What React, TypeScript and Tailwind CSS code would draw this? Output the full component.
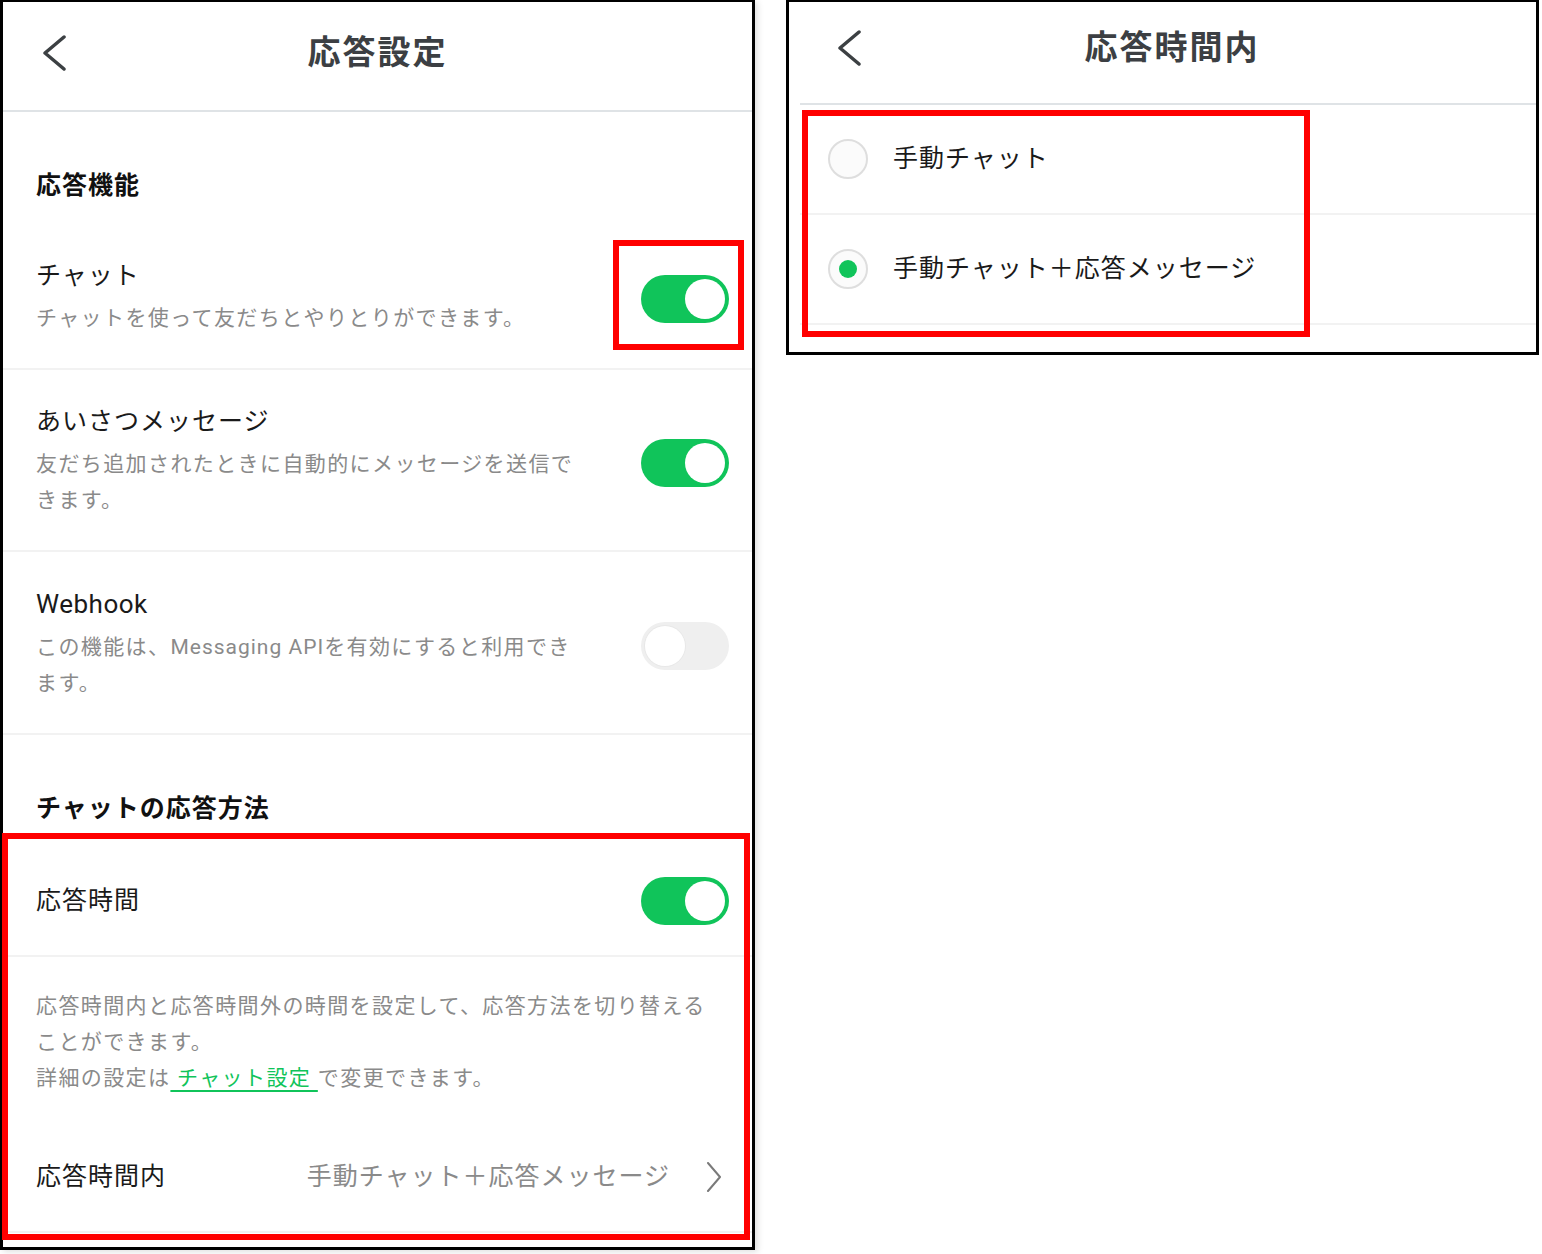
import React from "react";

const BackChevron = () => (
  <svg width="24" height="36" viewBox="0 0 24 36" fill="none">
    <path d="M22 2 L3 18 L22 34" stroke="#3c4043" strokeWidth="3.5" strokeLinecap="round" strokeLinejoin="round" />
  </svg>
);

const NextChevron = () => (
  <svg width="16" height="30" viewBox="0 0 16 30" fill="none">
    <path d="M2 1 L14 15 L2 29" stroke="#7a7a7a" strokeWidth="2" strokeLinecap="round" strokeLinejoin="round" />
  </svg>
);

const Toggle = ({ on }: { on: boolean }) =>
  on ? (
    <div className="flex h-[48px] w-[88px] shrink-0 items-center justify-end rounded-full bg-[#10c45a] p-[4px]">
      <div className="h-[40px] w-[40px] rounded-full bg-white" />
    </div>
  ) : (
    <div className="flex h-[48px] w-[88px] shrink-0 items-center justify-start rounded-full bg-[#efefef] p-[4px]">
      <div className="h-[40px] w-[40px] rounded-full bg-white shadow-[0_0_0_1px_#e8e8e8]" />
    </div>
  );

const SectionHeading = ({ children }: { children: React.ReactNode }) => (
  <div className="pb-[26px] pl-[33px] pt-[62px] text-[25px] font-bold leading-[24px] tracking-[1px] text-[#111]">
    {children}
  </div>
);

const SettingRow = ({ title, lines, on }: { title: React.ReactNode; lines: React.ReactNode[]; on: boolean }) => (
  <div className="flex items-center justify-between border-b-2 border-[#f2f2f2] pb-[32px] pl-[33px] pr-[23px] pt-[38px]">
    <div className="w-[580px]">
      <div className="text-[25px] leading-[28px] tracking-[1px] text-[#1a1a1a]">{title}</div>
      <div className="mt-[10px] text-[21px] leading-[36px] tracking-[1.4px] text-[#8a8a8a]">
        {lines.map((l, i) => (
          <div key={i} className="whitespace-nowrap">
            {l}
          </div>
        ))}
      </div>
    </div>
    <Toggle on={on} />
  </div>
);

const RadioRow = ({ label, checked }: { label: string; checked: boolean }) => (
  <div className="flex h-[110px] items-center border-b-2 border-[#f2f2f2] pl-[28px]">
    <div className="flex h-[40px] w-[40px] shrink-0 items-center justify-center rounded-full border-2 border-[#dedede] bg-[#fbfbfb]">
      {checked && <div className="h-[18px] w-[18px] rounded-full bg-[#10c45a]" />}
    </div>
    <div className="ml-[25px] text-[25px] leading-[28px] tracking-[1px] text-[#1a1a1a]">{label}</div>
  </div>
);

export default function App() {
  return (
    <div className="relative flex h-[1254px] w-[1542px] items-start gap-[31px] bg-white [font-family:Roboto,'Noto_Sans_CJK_JP',sans-serif]">
      {/* 応答設定 screen */}
      <div className="h-[1250px] w-[755px] shrink-0 overflow-hidden border-x-[3px] border-b-[3px] border-t-2 border-black bg-white shadow-[3px_2px_6px_rgba(0,0,0,0.12)]">
        <header className="grid h-[110px] grid-cols-[80px_1fr_80px] items-start border-b-2 border-[#dfe3e6] pt-[31px]">
          <div className="pl-[39px] pt-[2px]">
            <BackChevron />
          </div>
          <h1 className="text-center text-[33px] font-bold leading-[40px] tracking-[2px] text-[#3c3f43]">応答設定</h1>
          <div />
        </header>

        <SectionHeading>応答機能</SectionHeading>
        <SettingRow title="チャット" on lines={["チャットを使って友だちとやりとりができます。"]} />
        <SettingRow
          title="あいさつメッセージ"
          on
          lines={["友だち追加されたときに自動的にメッセージを送信で", "きます。"]}
        />
        <SettingRow
          title={<span className="text-[26px] tracking-[0.5px]">Webhook</span>}
          on={false}
          lines={[
            <>
              この機能は、<span className="tracking-[1px]">Messaging API</span>を有効にすると利用でき
            </>,
            "ます。",
          ]}
        />

        <SectionHeading>チャットの応答方法</SectionHeading>
        <div className="flex h-[110px] items-center justify-between border-b-2 border-[#f2f2f2] pl-[33px] pr-[23px]">
          <div className="text-[25px] leading-[28px] tracking-[1px] text-[#1a1a1a]">応答時間</div>
          <Toggle on />
        </div>
        <div className="pb-[27px] pl-[33px] pt-[31px] text-[21px] leading-[36px] tracking-[1.4px] text-[#8a8a8a]">
          <div className="whitespace-nowrap">応答時間内と応答時間外の時間を設定して、応答方法を切り替える</div>
          <div className="whitespace-nowrap">ことができます。</div>
          <div className="whitespace-nowrap">
            詳細の設定は<span className="text-[#10c45a] underline decoration-[#10c45a] decoration-2 underline-offset-[5px]"> チャット設定 </span>で変更できます。
          </div>
        </div>
        <div className="flex h-[110px] items-center border-b-2 border-[#f2f2f2] pl-[33px] pr-[30px]">
          <div className="flex-1 text-[25px] leading-[28px] tracking-[1px] text-[#1a1a1a]">応答時間内</div>
          <div className="text-[25px] leading-[28px] tracking-[1px] text-[#8a8a8a]">手動チャット＋応答メッセージ</div>
          <div className="ml-[36px]">
            <NextChevron />
          </div>
        </div>
      </div>

      {/* 応答時間内 screen */}
      <div className="h-[355px] w-[753px] shrink-0 overflow-hidden border-x-[3px] border-b-[3px] border-t-2 border-black bg-white">
        <div className="ml-[11px] w-[752px]">
          <header className="grid h-[103px] grid-cols-[80px_1fr_88px] items-start border-b-2 border-[#dfe3e6] pt-[26px]">
            <div className="pl-[37px] pt-[2px]">
              <BackChevron />
            </div>
            <h1 className="text-center text-[33px] font-bold leading-[40px] tracking-[2px] text-[#3c3f43]">応答時間内</h1>
            <div />
          </header>
          <RadioRow label="手動チャット" checked={false} />
          <RadioRow label="手動チャット＋応答メッセージ" checked />
        </div>
      </div>

      {/* highlight frames */}
      <div className="pointer-events-none absolute left-[613px] top-[240px] h-[110px] w-[131px] border-[6px] border-[#ff0000]" />
      <div className="pointer-events-none absolute left-[2px] top-[833px] h-[407px] w-[748px] border-[6px] border-[#ff0000]" />
      <div className="pointer-events-none absolute left-[802px] top-[110px] h-[227px] w-[508px] border-[6px] border-[#ff0000]" />
    </div>
  );
}
